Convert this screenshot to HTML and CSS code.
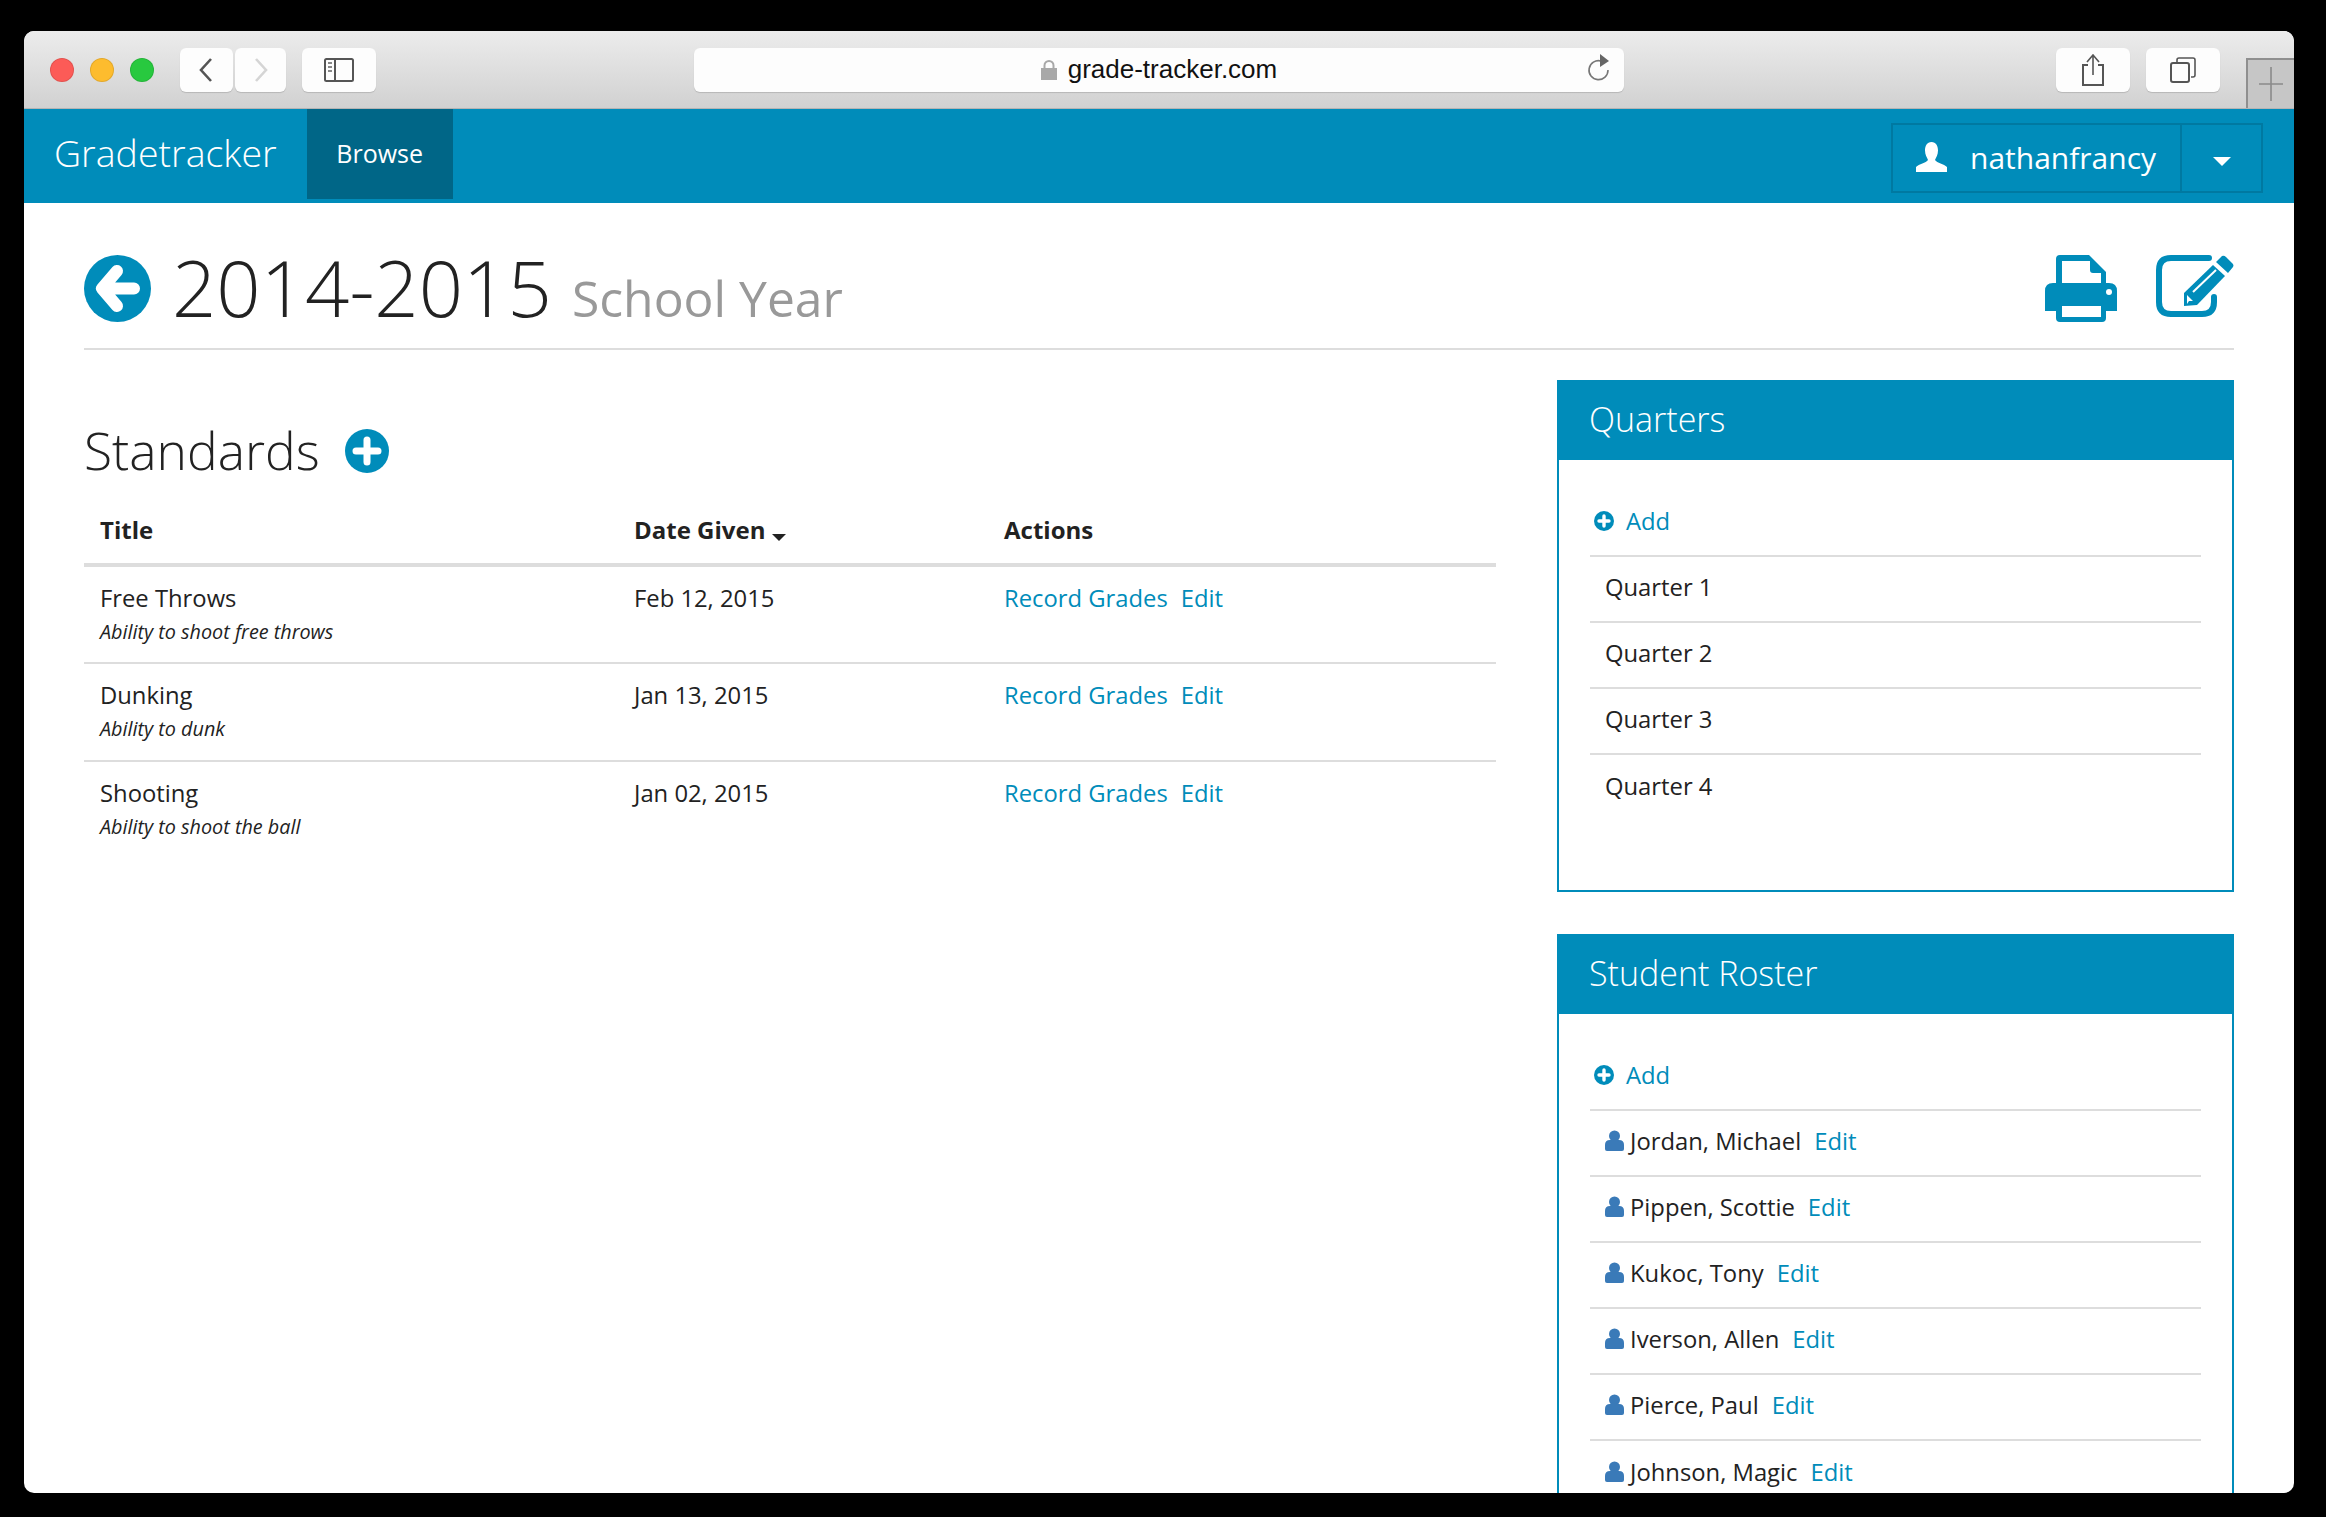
FILE: index.html
```html
<!DOCTYPE html>
<html lang="en">
<head>
    <meta charset="UTF-8">
    <title>Gradetracker</title>
    <link rel="stylesheet" href="styles.css">
</head>
<body>
    <div class="janela">
        <!-- Browser toolbar -->
        <div class="barra-browser">
            <div class="semaforo">
                <span class="luz luz-vermelha"></span>
                <span class="luz luz-amarela"></span>
                <span class="luz luz-verde"></span>
            </div>
            <div class="nav-setas">
                <span class="btn-browser btn-seta">
                    <svg width="16" height="24" viewBox="0 0 16 24"><path d="M12 1 L2 12 L12 23" fill="none" stroke="#555" stroke-width="2.6"/></svg>
                </span>
                <span class="btn-browser btn-seta-dir">
                    <svg width="16" height="24" viewBox="0 0 16 24"><path d="M3 1 L13 12 L3 23" fill="none" stroke="#d5d5d5" stroke-width="2.6"/></svg>
                </span>
            </div>
            <span class="btn-browser btn-largo">
                <svg width="30" height="24" viewBox="0 0 30 24"><rect x="1" y="1" width="28" height="22" rx="1.5" fill="none" stroke="#555" stroke-width="2"/><path d="M11 1 V23" stroke="#555" stroke-width="2"/><path d="M4 5 H8 M4 9 H8 M4 13 H8" stroke="#888" stroke-width="2"/></svg>
            </span>
            <div class="endereco">
                <svg class="cadeado" width="16" height="20" viewBox="0 0 16 20"><rect x="0" y="8" width="16" height="12" fill="#a8a8a8"/><path d="M3.5 9 V5.5 A4.5 4.5 0 0 1 12.5 5.5 V9" fill="none" stroke="#a8a8a8" stroke-width="2"/></svg>
                <span class="url">grade-tracker.com</span>
                <svg class="recarregar" width="24" height="28" viewBox="0 0 24 28"><path d="M14 7 A9.5 9.5 0 1 0 21 16" fill="none" stroke="#777" stroke-width="1.6"/><path d="M13 0 L22 7 L13 13 Z" fill="#666"/></svg>
            </div>
            <div class="acoes-browser">
                <span class="btn-browser btn-largo">
                    <svg width="24" height="32" viewBox="0 0 24 32"><path d="M7 11 H2 V31 H22 V11 H17" fill="none" stroke="#555" stroke-width="2"/><path d="M12 2 V21 M6 8 L12 1 L18 8" fill="none" stroke="#555" stroke-width="1.6"/></svg>
                </span>
                <span class="btn-browser btn-largo">
                    <svg width="26" height="26" viewBox="0 0 26 26"><rect x="1" y="6" width="18" height="19" rx="2" fill="none" stroke="#555" stroke-width="2"/><path d="M7 5 V3 Q7 1 9 1 H23 Q25 1 25 3 V18 Q25 20 23 20 H21" fill="none" stroke="#555" stroke-width="1.6"/></svg>
                </span>
            </div>
            <span class="nova-aba">
                <svg width="24" height="34" viewBox="0 0 24 34"><path d="M12 0 V34 M0 17 H24" stroke="#8a8a8a" stroke-width="1.6"/></svg>
            </span>
        </div>

        <!-- Site navbar -->
        <nav class="navbar">
            <a class="marca">Gradetracker</a>
            <a class="nav-ativo">Browse</a>
            <div class="usuario">
                <span class="usuario-nome">
                    <svg width="31" height="30" viewBox="0 0 31 30"><path d="M15.5 0 C20 0 22 4 22 8.5 C22 13 20 15.5 19 18 C21 21 28 22 31 25 V30 H0 V25 C3 22 10 21 12 18 C11 15.5 9 13 9 8.5 C9 4 11 0 15.5 0 Z" fill="#fff"/></svg>
                    <span>nathanfrancy</span>
                </span>
                <span class="usuario-seta"></span>
            </div>
        </nav>

        <main class="conteudo">
            <!-- Page title -->
            <header class="cabecalho">
                <div class="titulo">
                    <svg class="icone-voltar" width="67" height="67" viewBox="0 0 67 67">
                        <circle cx="33.5" cy="33.5" r="33.5" fill="#008cba"/>
                        <path d="M33 16 L18 33.5 L33 51 M22 33.5 H50" fill="none" stroke="#fff" stroke-width="12" stroke-linecap="round" stroke-linejoin="round"/>
                    </svg>
                    <h1>2014-2015 <small>School Year</small></h1>
                </div>
                <div class="icones-topo">
                    <svg width="72" height="67" viewBox="0 0 72 67">
                        <path fill="#008cba" fill-rule="evenodd" d="M15 0 H44 L61 17 V28 H64 Q72 28 72 36 V56 H61 V63 Q61 67 57 67 H15 Q11 67 11 63 V56 H0 V36 Q0 28 8 28 H11 V4 Q11 0 15 0 Z M17 6 V28 H56 V18 H48 Q45 18 45 15 V6 Z M17 51 V62 H56 V51 Z"/>
                        <circle cx="64" cy="37" r="3" fill="#fff"/>
                    </svg>
                    <svg width="78" height="62" viewBox="0 0 78 62">
                        <path d="M53 3 H15 Q3 3 3 15 V47 Q3 59 15 59 H46 Q58 59 58 47 V42" fill="none" stroke="#008cba" stroke-width="6" stroke-linecap="round"/>
                        <path d="M66 1 Q68 0 70 2 L77 9 Q78 11 77 12 L72 18 L60 7 Z" fill="#008cba"/>
                        <path d="M57 10 L69 21 L41 50 L28 51 L28 38 Z" fill="#008cba"/>
                        <path d="M60 15 L37 37" stroke="#fff" stroke-width="2"/>
                        <path d="M31 40 L37 46 L33 46 L31 49 Z" fill="#fff"/>
                    </svg>
                </div>
            </header>

            <div class="colunas">
                <!-- Standards -->
                <section class="coluna-esquerda">
                    <div class="standards-titulo">
                        <h2>Standards</h2>
                        <svg width="44" height="44" viewBox="0 0 44 44">
                            <circle cx="22" cy="22" r="22" fill="#008cba"/>
                            <path d="M22 11 V33 M11 22 H33" stroke="#fff" stroke-width="7" stroke-linecap="round"/>
                        </svg>
                    </div>
                    <table>
                        <thead>
                            <tr>
                                <th class="col-titulo">Title</th>
                                <th class="col-data">Date Given <span class="ordem"></span></th>
                                <th>Actions</th>
                            </tr>
                        </thead>
                        <tbody>
                            <tr>
                                <td>Free Throws<em>Ability to shoot free throws</em></td>
                                <td>Feb 12, 2015</td>
                                <td><a class="link">Record Grades</a><a class="link">Edit</a></td>
                            </tr>
                            <tr>
                                <td>Dunking<em>Ability to dunk</em></td>
                                <td>Jan 13, 2015</td>
                                <td><a class="link">Record Grades</a><a class="link">Edit</a></td>
                            </tr>
                            <tr>
                                <td>Shooting<em>Ability to shoot the ball</em></td>
                                <td>Jan 02, 2015</td>
                                <td><a class="link">Record Grades</a><a class="link">Edit</a></td>
                            </tr>
                        </tbody>
                    </table>
                </section>

                <aside class="coluna-direita">
                    <!-- Quarters -->
                    <section class="painel painel-quarters">
                        <h3>Quarters</h3>
                        <ul class="lista">
                            <li class="item-add">
                                <svg width="20" height="20" viewBox="0 0 20 20"><circle cx="10" cy="10" r="10" fill="#008cba"/><path d="M10 5 V15 M5 10 H15" stroke="#fff" stroke-width="3.4" stroke-linecap="round"/></svg>
                                <a class="link">Add</a>
                            </li>
                            <li>Quarter 1</li>
                            <li>Quarter 2</li>
                            <li>Quarter 3</li>
                            <li>Quarter 4</li>
                        </ul>
                    </section>

                    <!-- Student Roster -->
                    <section class="painel">
                        <h3>Student Roster</h3>
                        <ul class="lista">
                            <li class="item-add">
                                <svg width="20" height="20" viewBox="0 0 20 20"><circle cx="10" cy="10" r="10" fill="#008cba"/><path d="M10 5 V15 M5 10 H15" stroke="#fff" stroke-width="3.4" stroke-linecap="round"/></svg>
                                <a class="link">Add</a>
                            </li>
                            <li class="aluno"><svg width="19" height="21" viewBox="0 0 19 21"><circle cx="9.5" cy="6" r="5.5" fill="#3a7ab8"/><path d="M0 19 V15 Q0 10 5 10 H14 Q19 10 19 15 V19 Q19 21 17 21 H2 Q0 21 0 19 Z" fill="#3a7ab8"/></svg>Jordan, Michael<a class="link">Edit</a></li>
                            <li class="aluno"><svg width="19" height="21" viewBox="0 0 19 21"><circle cx="9.5" cy="6" r="5.5" fill="#3a7ab8"/><path d="M0 19 V15 Q0 10 5 10 H14 Q19 10 19 15 V19 Q19 21 17 21 H2 Q0 21 0 19 Z" fill="#3a7ab8"/></svg>Pippen, Scottie<a class="link">Edit</a></li>
                            <li class="aluno"><svg width="19" height="21" viewBox="0 0 19 21"><circle cx="9.5" cy="6" r="5.5" fill="#3a7ab8"/><path d="M0 19 V15 Q0 10 5 10 H14 Q19 10 19 15 V19 Q19 21 17 21 H2 Q0 21 0 19 Z" fill="#3a7ab8"/></svg>Kukoc, Tony<a class="link">Edit</a></li>
                            <li class="aluno"><svg width="19" height="21" viewBox="0 0 19 21"><circle cx="9.5" cy="6" r="5.5" fill="#3a7ab8"/><path d="M0 19 V15 Q0 10 5 10 H14 Q19 10 19 15 V19 Q19 21 17 21 H2 Q0 21 0 19 Z" fill="#3a7ab8"/></svg>Iverson, Allen<a class="link">Edit</a></li>
                            <li class="aluno"><svg width="19" height="21" viewBox="0 0 19 21"><circle cx="9.5" cy="6" r="5.5" fill="#3a7ab8"/><path d="M0 19 V15 Q0 10 5 10 H14 Q19 10 19 15 V19 Q19 21 17 21 H2 Q0 21 0 19 Z" fill="#3a7ab8"/></svg>Pierce, Paul<a class="link">Edit</a></li>
                            <li class="aluno"><svg width="19" height="21" viewBox="0 0 19 21"><circle cx="9.5" cy="6" r="5.5" fill="#3a7ab8"/><path d="M0 19 V15 Q0 10 5 10 H14 Q19 10 19 15 V19 Q19 21 17 21 H2 Q0 21 0 19 Z" fill="#3a7ab8"/></svg>Johnson, Magic<a class="link">Edit</a></li>
                        </ul>
                    </section>
                </aside>
            </div>
        </main>
    </div>
</body>
</html>
```

FILE: styles.css
```css
/* Page and window */
html, body {
    height: 100%;
}

body {
    margin: 0;
    padding: 31px 32px 24px 24px;
    box-sizing: border-box;
    background-color: #000;
    font-family: "Open Sans", sans-serif;
    font-size: 23.8px;
    color: #222;
    overflow: hidden;
}

.janela {
    height: 1462px;
    background-color: #fff;
    border-radius: 10px;
    overflow: hidden;
}

/* Browser toolbar */
.barra-browser {
    display: flex;
    align-items: center;
    height: 77px;
    padding: 0 0 0 26px;
    background: linear-gradient(#ececec, #d1d1d1);
    border-bottom: 1px solid #b4b4b4;
    box-sizing: content-box;
}

.semaforo {
    display: flex;
    gap: 16px;
    margin-right: 26px;
}

.luz {
    width: 24px;
    height: 24px;
    border-radius: 50%;
    box-sizing: border-box;
    border: 1px solid rgba(0, 0, 0, 0.1);
}

.luz-vermelha { background-color: #fc5b57; }
.luz-amarela { background-color: #fdbc2e; }
.luz-verde { background-color: #28c93f; }

.nav-setas {
    display: flex;
    gap: 2px;
    margin-right: 16px;
}

.btn-browser {
    display: flex;
    align-items: center;
    justify-content: center;
    height: 44px;
    background-color: #fdfdfd;
    border-radius: 6px;
    box-shadow: 0 1px 1px rgba(0, 0, 0, 0.15);
}

.btn-seta { width: 53px; }
.btn-seta-dir { width: 51px; }
.btn-largo { width: 74px; }

.endereco {
    position: relative;
    display: flex;
    align-items: center;
    justify-content: center;
    gap: 11px;
    width: 931px;
    height: 44px;
    margin-left: 318px;
    background-color: #fdfdfd;
    border-radius: 6px;
    box-shadow: 0 1px 1px rgba(0, 0, 0, 0.15);
}

.url {
    font-family: "Liberation Sans", sans-serif;
    font-size: 26px;
    color: #111;
}

.recarregar {
    position: absolute;
    right: 13px;
    top: 6px;
}

.acoes-browser {
    display: flex;
    gap: 16px;
    margin-left: 432px;
}

.nova-aba {
    display: flex;
    align-items: center;
    justify-content: center;
    align-self: flex-end;
    width: 46px;
    height: 48px;
    margin-left: 26px;
    background-color: #c6c6c6;
    border-top: 2px solid #8f8f8f;
    border-left: 2px solid #8f8f8f;
}

/* Site navbar */
.navbar {
    display: flex;
    height: 94px;
    background-color: #008cba;
    color: #fff;
}

.marca {
    margin: 0 30px 0 30px;
    font-size: 37.5px;
    font-weight: 300;
    line-height: 87px;
}

.nav-ativo {
    width: 146px;
    height: 90px;
    background-color: #006687;
    font-size: 25px;
    line-height: 88px;
    text-align: center;
}

.usuario {
    display: flex;
    width: 372px;
    height: 70px;
    margin: 14px 31px 0 auto;
    border: 2px solid #0079a1;
    box-sizing: border-box;
}

.usuario-nome {
    display: flex;
    align-items: center;
    gap: 23px;
    width: 289px;
    padding: 0 0 2px 23px;
    box-sizing: border-box;
    border-right: 2px solid #0079a1;
    font-size: 30px;
}

.usuario-seta {
    width: 0;
    height: 0;
    margin: 32px 0 0 31px;
    border-left: 9px solid transparent;
    border-right: 9px solid transparent;
    border-top: 9px solid #fff;
}

/* Main content */
.conteudo {
    padding: 0 60px;
}

.cabecalho {
    display: flex;
    justify-content: space-between;
    height: 147px;
    padding-top: 52px;
    box-sizing: border-box;
    border-bottom: 2px solid #ddd;
}

.titulo {
    display: flex;
    align-items: flex-start;
    gap: 21px;
}

h1 {
    margin: -20px 0 0;
    font-size: 77.7px;
    font-weight: 300;
    line-height: 104px;
    white-space: nowrap;
}

h1 small {
    font-size: 49.8px;
    font-weight: 400;
    color: #999;
}

.icones-topo {
    display: flex;
    gap: 39px;
    align-items: flex-start;
}

.colunas {
    display: grid;
    grid-template-columns: 1412px 677px;
    column-gap: 61px;
    padding-top: 30px;
}

/* Standards */
.standards-titulo {
    display: flex;
    align-items: center;
    gap: 25px;
    height: 60px;
    margin-top: 41px;
}

h2 {
    margin: -3px 0 0;
    font-size: 51.5px;
    font-weight: 300;
}

table {
    width: 100%;
    margin-top: 14px;
    border-collapse: collapse;
}

th {
    height: 70px;
    padding: 0 16px;
    box-sizing: border-box;
    border-bottom: 4px solid #ddd;
    font-size: 24px;
    font-weight: 700;
    text-align: left;
}

.col-titulo { width: 534px; }
.col-data { width: 370px; }

.ordem {
    display: inline-block;
    width: 0;
    height: 0;
    margin-left: 0;
    vertical-align: -2px;
    border-left: 7px solid transparent;
    border-right: 7px solid transparent;
    border-top: 7px solid #222;
}

td {
    height: 98px;
    padding: 15px 16px 0;
    box-sizing: border-box;
    border-bottom: 2px solid #ddd;
    vertical-align: top;
    line-height: 32px;
}

tbody tr:last-child td {
    border-bottom: none;
}

td em {
    display: block;
    font-size: 19.8px;
    line-height: 35px;
}

.link {
    margin-right: 13px;
    color: #008cba;
}

/* Side panels */
.painel {
    margin-bottom: 42px;
    border: 2px solid #008cba;
    border-top: none;
}

.painel-quarters {
    height: 512px;
    box-sizing: border-box;
}

.painel h3 {
    margin: 0 -2px;
    padding-left: 32px;
    height: 80px;
    background-color: #008cba;
    color: #fff;
    font-size: 34px;
    font-weight: 300;
    line-height: 79px;
}

.lista {
    margin: 0;
    padding: 31px 31px 0;
    list-style: none;
}

.lista li {
    display: flex;
    align-items: center;
    height: 66px;
    padding: 0 0 5px 15px;
    box-sizing: border-box;
    border-bottom: 2px solid #ddd;
}

.lista li:last-child {
    border-bottom: none;
}

.lista .item-add {
    gap: 12px;
    padding-left: 4px;
}

.aluno svg {
    margin-right: 6px;
}

.aluno .link {
    margin-left: 13px;
}
```
